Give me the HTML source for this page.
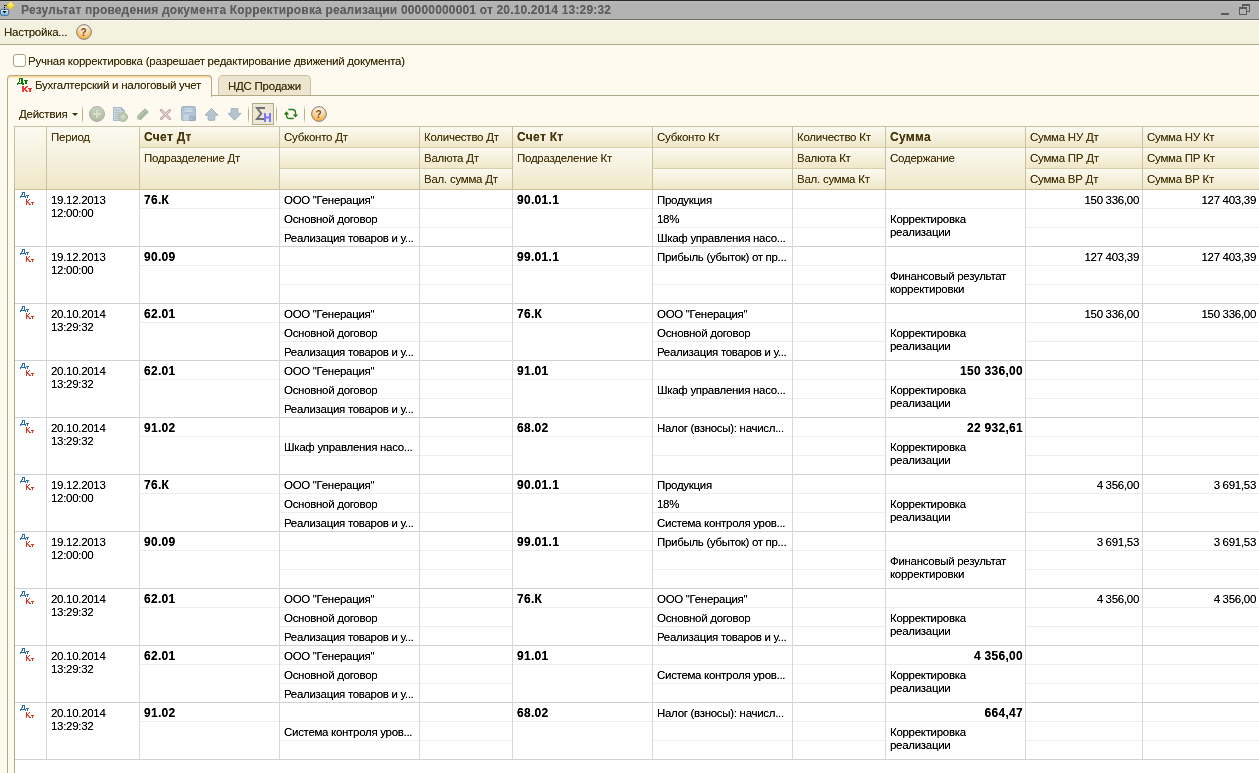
<!DOCTYPE html>
<html><head><meta charset="utf-8"><style>
html,body{margin:0;padding:0;}
body{width:1259px;height:773px;overflow:hidden;position:relative;background:#fffaef;font-family:"Liberation Sans", sans-serif;font-size:11px;}
.t{position:absolute;white-space:nowrap;line-height:13px;font-size:11.5px;font-family:"Liberation Sans", sans-serif;letter-spacing:-0.25px}
.b{font-weight:bold;font-size:12px;letter-spacing:0.3px}
.d{letter-spacing:-0.3px}
</style></head><body>
<svg width="0" height="0" style="position:absolute"><filter id="tb" x="0" y="0" width="1" height="1" color-interpolation-filters="sRGB"><feComponentTransfer><feFuncA type="linear" slope="1.35" intercept="-0.05"/></feComponentTransfer></filter></svg>
<div style="position:absolute;left:0px;top:0px;width:1259px;height:1px;background:#2c2c2c"></div><div style="position:absolute;left:0px;top:1px;width:1259px;height:18px;background:linear-gradient(#b9b9b9,#b3b3b3 3px,#b2b2b2)"></div><div style="position:absolute;left:0px;top:19px;width:1259px;height:1px;background:#6d6d6d"></div><svg style="position:absolute;left:0;top:0" width="17" height="17" viewBox="0 0 17 17">
<defs><linearGradient id="tig" x1="0" y1="0" x2="0" y2="1"><stop offset="0" stop-color="#d8f2ff"/><stop offset="1" stop-color="#7cc0e8"/></linearGradient>
<linearGradient id="tid" x1="0" y1="0" x2="0" y2="1"><stop offset="0" stop-color="#fffbd0"/><stop offset="0.5" stop-color="#f8e43c"/><stop offset="1" stop-color="#f0d010"/></linearGradient></defs>
<rect x="0.5" y="9.3" width="8.2" height="6" rx="1.6" fill="url(#tig)" stroke="#3d6d94"/>
<path d="M10.6 1.2 L14.8 5.5 L10.6 9.8 L6.6 5.5 Z" fill="url(#tid)" stroke="#d6a84a" stroke-width="0.7"/>
<path d="M4.5 5.5 H7" stroke="#000" stroke-dasharray="1 1"/>
<path d="M4.5 5 V11" stroke="#000" stroke-dasharray="1 1"/>
<path d="M2.4 11 H6.6 L4.5 13.6 Z" fill="#000"/>
</svg><div style="position:absolute;left:1221px;top:13px;width:8px;height:2px;background:#5a5a5a"></div><div style="position:absolute;left:1242px;top:4px;width:8px;height:8px;border:1px solid #5a5a5a;border-top-width:2px;box-sizing:border-box"></div><div style="position:absolute;left:1239px;top:7px;width:8px;height:8px;border:1px solid #5a5a5a;border-top-width:2px;box-sizing:border-box;background:#b4b4b4"></div><div style="position:absolute;left:0px;top:20px;width:1259px;height:24px;background:linear-gradient(#f9f7ea,#f3f1df 2px)"></div><div style="position:absolute;left:0px;top:44px;width:1259px;height:1px;background:#b2aa85"></div><svg style="position:absolute;left:76px;top:24px" width="16" height="16" viewBox="0 0 16 16">
<defs><radialGradient id="hg76" cx="0.5" cy="0.25" r="0.8"><stop offset="0" stop-color="#fffaf0"/><stop offset="0.35" stop-color="#fbe2b8"/><stop offset="0.8" stop-color="#f6b553"/><stop offset="1" stop-color="#f0a23a"/></radialGradient></defs>
<circle cx="8" cy="8" r="7.4" fill="url(#hg76)" stroke="#85838a" stroke-width="1"/>
<text x="7.6" y="11.6" text-anchor="middle" font-family="Liberation Sans" font-weight="bold" font-size="10" fill="#76471c">?</text>
</svg><div style="position:absolute;left:0px;top:45px;width:1259px;height:728px;background:#fffaef"></div><div style="position:absolute;left:13px;top:54px;width:13px;height:13px;border:1px solid #aaa27f;border-radius:3px;background:#fffffa;box-sizing:border-box"></div><div style="position:absolute;left:218px;top:75px;width:93px;height:21px;background:#ece6d1;border:1px solid #c9c1a0;border-bottom:none;border-radius:5px 5px 0 0;box-sizing:border-box"></div><div style="position:absolute;left:7px;top:95px;width:1252px;height:1px;background:#b2aa85"></div><div style="position:absolute;left:7px;top:95px;width:1px;height:678px;background:#b2aa85"></div><div style="position:absolute;left:7px;top:75px;width:205px;height:22px;background:#fffaef;border:1px solid #b2aa85;border-bottom:none;border-radius:4px 4px 0 0;box-sizing:border-box;box-shadow:inset 0 1px #fbd697,inset 0 2px #fde7bb"></div><svg style="position:absolute;left:16px;top:77px" width="17" height="16" shape-rendering="crispEdges"><rect x="3" y="1" width="4" height="1" fill="#0b7a0b" opacity="1"/><rect x="3" y="2" width="1" height="3" fill="#0b7a0b" opacity="1"/><rect x="5" y="2" width="2" height="4" fill="#0b7a0b" opacity="1"/><rect x="2" y="5" width="1" height="1" fill="#0b7a0b" opacity="1"/><rect x="1" y="6" width="7" height="1" fill="#0b7a0b" opacity="1"/><rect x="1" y="7" width="1" height="1" fill="#0b7a0b" opacity="1"/><rect x="6" y="7" width="2" height="1" fill="#0b7a0b" opacity="1"/><rect x="8" y="3" width="4" height="1" fill="#0b7a0b" opacity="1"/><rect x="9" y="4" width="2" height="3" fill="#0b7a0b" opacity="1"/><rect x="6" y="9" width="2" height="6" fill="#ff3232" opacity="1"/><rect x="10" y="9" width="2" height="1" fill="#ff3232" opacity="1"/><rect x="9" y="10" width="2" height="1" fill="#ff3232" opacity="1"/><rect x="8" y="11" width="2" height="2" fill="#ff3232" opacity="1"/><rect x="9" y="13" width="2" height="1" fill="#ff3232" opacity="1"/><rect x="10" y="14" width="2" height="1" fill="#ff3232" opacity="1"/><rect x="12" y="11" width="4" height="1" fill="#ff3232" opacity="1"/><rect x="13" y="12" width="2" height="3" fill="#ff3232" opacity="1"/></svg><div style="position:absolute;left:72px;top:113px;width:0;height:0;border-left:3px solid transparent;border-right:3px solid transparent;border-top:3px solid #3a2f0f"></div><div style="position:absolute;left:82px;top:105px;width:1px;height:19px;background:linear-gradient(#fffaef,#b9b08a 30%,#b9b08a 70%,#fffaef)"></div><div style="position:absolute;left:248px;top:105px;width:1px;height:19px;background:linear-gradient(#fffaef,#b9b08a 30%,#b9b08a 70%,#fffaef)"></div><div style="position:absolute;left:276px;top:105px;width:1px;height:19px;background:linear-gradient(#fffaef,#b9b08a 30%,#b9b08a 70%,#fffaef)"></div><div style="position:absolute;left:304px;top:105px;width:1px;height:19px;background:linear-gradient(#fffaef,#b9b08a 30%,#b9b08a 70%,#fffaef)"></div><svg style="position:absolute;left:89px;top:106px" width="16" height="16" viewBox="0 0 16 16" ><defs><linearGradient id="cpg" x1="0" y1="0" x2="0" y2="1"><stop offset="0" stop-color="#c6d4b8"/><stop offset="1" stop-color="#aebd9f"/></linearGradient></defs>
<circle cx="8" cy="8" r="7.5" fill="url(#cpg)" stroke="#aaa6aa" stroke-width="0.9"/>
<rect x="4" y="7" width="8" height="2" fill="#dcdcd2"/><rect x="7" y="4" width="2" height="8" fill="#dcdcd2"/></svg><svg style="position:absolute;left:113px;top:107px" width="16" height="15" viewBox="0 0 16 15" ><path d="M0.5 0.5 H8.5 L11.5 3.5 V13.5 H0.5 Z" fill="#cdd5dc" stroke="#a9b9c9"/>
<path d="M8.5 0.5 V3.5 H11.5" fill="#b7c7d6" stroke="#a9b9c9"/>
<rect x="2" y="3" width="5" height="1" fill="#b3bcc4"/><rect x="2" y="5" width="5" height="1" fill="#b3bcc4"/>
<rect x="2" y="7" width="5" height="1" fill="#a9c0d6"/><rect x="2" y="9" width="4" height="1" fill="#a9c0d6"/><rect x="2" y="11" width="4" height="1" fill="#a9c0d6"/>
<circle cx="10" cy="10" r="4.6" fill="#b7c8a8" stroke="#a9b99a" stroke-width="0.8"/>
<rect x="7.5" y="9.2" width="5" height="1.6" fill="#d8d8d0"/><rect x="9.2" y="7.5" width="1.6" height="5" fill="#d8d8d0"/></svg><svg style="position:absolute;left:137px;top:108px" width="12" height="12" viewBox="0 0 12 12" ><path d="M0 12 L0 8.2 L8 0.2 L11.8 4 L3.8 12 Z" fill="#a7b79f"/>
<path d="M1.5 9.5 L8.6 2.4" stroke="#c3cfbc" stroke-width="1"/>
<path d="M0 12 L0 9 L3 12 Z" fill="#d5ddd0"/></svg><svg style="position:absolute;left:160px;top:109px" width="11" height="11" viewBox="0 0 11 11" ><path d="M1.2 1.2 L9.8 9.8 M9.8 1.2 L1.2 9.8" stroke="#c9aeb2" stroke-width="3" stroke-linecap="round"/>
<path d="M1.6 1.6 L9.4 9.4 M9.4 1.6 L1.6 9.4" stroke="#e9ddd9" stroke-width="1"/></svg><svg style="position:absolute;left:181px;top:106px" width="15" height="15" viewBox="0 0 15 15" ><rect x="0.5" y="0.5" width="14" height="14" rx="1.5" fill="#b2c6d9" stroke="#a3b6c9"/>
<rect x="3" y="1.5" width="9" height="5" fill="#c9d9e3" stroke="#a9bccd" stroke-width="0.8"/>
<rect x="4" y="3" width="7" height="1" fill="#b9cbd8"/>
<rect x="2.5" y="8.5" width="5" height="6" fill="#c9d3da"/>
<text x="8" y="14.6" font-family="Liberation Sans" font-weight="bold" font-size="6.5" fill="#8fa3b6">OK</text></svg><svg style="position:absolute;left:205px;top:108px" width="14" height="13" viewBox="0 0 14 13" ><path d="M6.5 0.5 L13.2 7.2 L9.8 7.2 L9.8 11.6 Q9.8 12.3 9.1 12.3 L3.9 12.3 Q3.2 12.3 3.2 11.6 L3.2 7.2 L-0.2 7.2 Z" fill="#b4c4d0" stroke="#9eadb9" stroke-width="0.9"/></svg><svg style="position:absolute;left:228px;top:108px" width="14" height="13" viewBox="0 0 14 13" ><path d="M3.2 0.6 Q3.2 0 3.9 0 L9.1 0 Q9.8 0 9.8 0.6 L9.8 5.3 L13.2 5.3 L6.5 12.2 L-0.2 5.3 L3.2 5.3 Z" fill="#b4c4d0" stroke="#9eadb9" stroke-width="0.9"/></svg><div style="position:absolute;left:252px;top:103px;width:22px;height:22px;background:#ede7d3;border:1px solid #b1a982;box-sizing:border-box"></div><svg style="position:absolute;left:255px;top:106px" width="18" height="18" viewBox="0 0 18 18" ><path d="M10 2 H2 L6.2 7.5 L2 13 H10" fill="none" stroke="#707070" stroke-width="2" stroke-linejoin="miter"/>
<path d="M10 7 V16 M15 7 V16 M10 11.5 H15" stroke="#7777ff" stroke-width="2"/></svg><svg style="position:absolute;left:280px;top:104px" width="22" height="20" viewBox="0 0 22 20" ><path d="M8.3 5.5 H12.3 Q15.5 5.5 15.5 9 V10.8" fill="none" stroke="#23801c" stroke-width="1.4"/>
<path d="M12.8 10.4 H18.2 L15.5 13.6 Z" fill="#1f7416"/>
<path d="M13.7 14.5 H9.6 Q6.5 14.5 6.5 11.2 V9.6" fill="none" stroke="#23801c" stroke-width="1.4"/>
<path d="M3.8 10.6 H9.2 L6.5 7.3 Z" fill="#1f7416"/></svg><svg style="position:absolute;left:311px;top:106px" width="16" height="16" viewBox="0 0 16 16">
<defs><radialGradient id="hg311" cx="0.5" cy="0.25" r="0.8"><stop offset="0" stop-color="#fffaf0"/><stop offset="0.35" stop-color="#fbe2b8"/><stop offset="0.8" stop-color="#f6b553"/><stop offset="1" stop-color="#f0a23a"/></radialGradient></defs>
<circle cx="8" cy="8" r="7.4" fill="url(#hg311)" stroke="#85838a" stroke-width="1"/>
<text x="7.6" y="11.6" text-anchor="middle" font-family="Liberation Sans" font-weight="bold" font-size="10" fill="#76471c">?</text>
</svg>
<div style="position:absolute;left:14px;top:126px;width:1245px;height:647px;background:#fff"></div><div style="position:absolute;left:15px;top:127px;width:31px;height:62px;background:linear-gradient(#fbfaf2,#f7f3e2 40%,#efe7c8)"></div><div style="position:absolute;left:47px;top:127px;width:92px;height:62px;background:linear-gradient(#fbfaf2,#f7f3e2 40%,#efe7c8)"></div><div style="position:absolute;left:140px;top:127px;width:139px;height:20px;background:linear-gradient(#fbfaf2,#f7f3e2 40%,#efe7c8)"></div><div style="position:absolute;left:140px;top:148px;width:139px;height:41px;background:linear-gradient(#fbfaf2,#f7f3e2 40%,#efe7c8)"></div><div style="position:absolute;left:140px;top:147px;width:139px;height:1px;background:#d9d0ab"></div><div style="position:absolute;left:280px;top:127px;width:139px;height:20px;background:linear-gradient(#fbfaf2,#f7f3e2 40%,#efe7c8)"></div><div style="position:absolute;left:280px;top:148px;width:139px;height:20px;background:linear-gradient(#fbfaf2,#f7f3e2 40%,#efe7c8)"></div><div style="position:absolute;left:280px;top:169px;width:139px;height:20px;background:linear-gradient(#fbfaf2,#f7f3e2 40%,#efe7c8)"></div><div style="position:absolute;left:280px;top:147px;width:139px;height:1px;background:#d9d0ab"></div><div style="position:absolute;left:280px;top:168px;width:139px;height:1px;background:#d9d0ab"></div><div style="position:absolute;left:420px;top:127px;width:92px;height:20px;background:linear-gradient(#fbfaf2,#f7f3e2 40%,#efe7c8)"></div><div style="position:absolute;left:420px;top:148px;width:92px;height:20px;background:linear-gradient(#fbfaf2,#f7f3e2 40%,#efe7c8)"></div><div style="position:absolute;left:420px;top:169px;width:92px;height:20px;background:linear-gradient(#fbfaf2,#f7f3e2 40%,#efe7c8)"></div><div style="position:absolute;left:420px;top:147px;width:92px;height:1px;background:#d9d0ab"></div><div style="position:absolute;left:420px;top:168px;width:92px;height:1px;background:#d9d0ab"></div><div style="position:absolute;left:513px;top:127px;width:139px;height:20px;background:linear-gradient(#fbfaf2,#f7f3e2 40%,#efe7c8)"></div><div style="position:absolute;left:513px;top:148px;width:139px;height:41px;background:linear-gradient(#fbfaf2,#f7f3e2 40%,#efe7c8)"></div><div style="position:absolute;left:513px;top:147px;width:139px;height:1px;background:#d9d0ab"></div><div style="position:absolute;left:653px;top:127px;width:139px;height:20px;background:linear-gradient(#fbfaf2,#f7f3e2 40%,#efe7c8)"></div><div style="position:absolute;left:653px;top:148px;width:139px;height:20px;background:linear-gradient(#fbfaf2,#f7f3e2 40%,#efe7c8)"></div><div style="position:absolute;left:653px;top:169px;width:139px;height:20px;background:linear-gradient(#fbfaf2,#f7f3e2 40%,#efe7c8)"></div><div style="position:absolute;left:653px;top:147px;width:139px;height:1px;background:#d9d0ab"></div><div style="position:absolute;left:653px;top:168px;width:139px;height:1px;background:#d9d0ab"></div><div style="position:absolute;left:793px;top:127px;width:92px;height:20px;background:linear-gradient(#fbfaf2,#f7f3e2 40%,#efe7c8)"></div><div style="position:absolute;left:793px;top:148px;width:92px;height:20px;background:linear-gradient(#fbfaf2,#f7f3e2 40%,#efe7c8)"></div><div style="position:absolute;left:793px;top:169px;width:92px;height:20px;background:linear-gradient(#fbfaf2,#f7f3e2 40%,#efe7c8)"></div><div style="position:absolute;left:793px;top:147px;width:92px;height:1px;background:#d9d0ab"></div><div style="position:absolute;left:793px;top:168px;width:92px;height:1px;background:#d9d0ab"></div><div style="position:absolute;left:886px;top:127px;width:139px;height:20px;background:linear-gradient(#fbfaf2,#f7f3e2 40%,#efe7c8)"></div><div style="position:absolute;left:886px;top:148px;width:139px;height:41px;background:linear-gradient(#fbfaf2,#f7f3e2 40%,#efe7c8)"></div><div style="position:absolute;left:886px;top:147px;width:139px;height:1px;background:#d9d0ab"></div><div style="position:absolute;left:1026px;top:127px;width:116px;height:20px;background:linear-gradient(#fbfaf2,#f7f3e2 40%,#efe7c8)"></div><div style="position:absolute;left:1026px;top:148px;width:116px;height:20px;background:linear-gradient(#fbfaf2,#f7f3e2 40%,#efe7c8)"></div><div style="position:absolute;left:1026px;top:169px;width:116px;height:20px;background:linear-gradient(#fbfaf2,#f7f3e2 40%,#efe7c8)"></div><div style="position:absolute;left:1026px;top:147px;width:116px;height:1px;background:#d9d0ab"></div><div style="position:absolute;left:1026px;top:168px;width:116px;height:1px;background:#d9d0ab"></div><div style="position:absolute;left:1143px;top:127px;width:147px;height:20px;background:linear-gradient(#fbfaf2,#f7f3e2 40%,#efe7c8)"></div><div style="position:absolute;left:1143px;top:148px;width:147px;height:20px;background:linear-gradient(#fbfaf2,#f7f3e2 40%,#efe7c8)"></div><div style="position:absolute;left:1143px;top:169px;width:147px;height:20px;background:linear-gradient(#fbfaf2,#f7f3e2 40%,#efe7c8)"></div><div style="position:absolute;left:1143px;top:147px;width:147px;height:1px;background:#d9d0ab"></div><div style="position:absolute;left:1143px;top:168px;width:147px;height:1px;background:#d9d0ab"></div><div style="position:absolute;left:14px;top:126px;width:1245px;height:1px;background:#c9c19f"></div><div style="position:absolute;left:14px;top:189px;width:1245px;height:1px;background:#c9c19f"></div><div style="position:absolute;left:14px;top:126px;width:1px;height:64px;background:#c9c19f"></div><div style="position:absolute;left:46px;top:126px;width:1px;height:64px;background:#c9c19f"></div><div style="position:absolute;left:139px;top:126px;width:1px;height:64px;background:#c9c19f"></div><div style="position:absolute;left:279px;top:126px;width:1px;height:64px;background:#c9c19f"></div><div style="position:absolute;left:419px;top:126px;width:1px;height:64px;background:#c9c19f"></div><div style="position:absolute;left:512px;top:126px;width:1px;height:64px;background:#c9c19f"></div><div style="position:absolute;left:652px;top:126px;width:1px;height:64px;background:#c9c19f"></div><div style="position:absolute;left:792px;top:126px;width:1px;height:64px;background:#c9c19f"></div><div style="position:absolute;left:885px;top:126px;width:1px;height:64px;background:#c9c19f"></div><div style="position:absolute;left:1025px;top:126px;width:1px;height:64px;background:#c9c19f"></div><div style="position:absolute;left:1142px;top:126px;width:1px;height:64px;background:#c9c19f"></div><div style="position:absolute;left:140px;top:208px;width:139px;height:1px;background:#ededed"></div><div style="position:absolute;left:280px;top:208px;width:139px;height:1px;background:#ededed"></div><div style="position:absolute;left:280px;top:227px;width:139px;height:1px;background:#ededed"></div><div style="position:absolute;left:420px;top:208px;width:92px;height:1px;background:#ededed"></div><div style="position:absolute;left:420px;top:227px;width:92px;height:1px;background:#ededed"></div><div style="position:absolute;left:513px;top:208px;width:139px;height:1px;background:#ededed"></div><div style="position:absolute;left:653px;top:208px;width:139px;height:1px;background:#ededed"></div><div style="position:absolute;left:653px;top:227px;width:139px;height:1px;background:#ededed"></div><div style="position:absolute;left:793px;top:208px;width:92px;height:1px;background:#ededed"></div><div style="position:absolute;left:793px;top:227px;width:92px;height:1px;background:#ededed"></div><div style="position:absolute;left:886px;top:208px;width:139px;height:1px;background:#ededed"></div><div style="position:absolute;left:1026px;top:208px;width:116px;height:1px;background:#ededed"></div><div style="position:absolute;left:1026px;top:227px;width:116px;height:1px;background:#ededed"></div><div style="position:absolute;left:1143px;top:208px;width:147px;height:1px;background:#ededed"></div><div style="position:absolute;left:1143px;top:227px;width:147px;height:1px;background:#ededed"></div><div style="position:absolute;left:15px;top:246px;width:1244px;height:1px;background:#cbd3d8"></div><svg style="position:absolute;left:19px;top:192px" width="16" height="14" shape-rendering="crispEdges"><rect x="3" y="0" width="3" height="1" fill="#2c6ca4" opacity="1"/><rect x="3" y="1" width="1" height="2" fill="#2c6ca4" opacity="1"/><rect x="2" y="3" width="1" height="1" fill="#2c6ca4" opacity="1"/><rect x="2" y="2" width="1" height="1" fill="#2c6ca4" opacity="0.4"/><rect x="5" y="1" width="1" height="3" fill="#2c6ca4" opacity="1"/><rect x="1" y="4" width="6" height="1" fill="#2c6ca4" opacity="1"/><rect x="1" y="5" width="1" height="1" fill="#2c6ca4" opacity="1"/><rect x="6" y="5" width="1" height="1" fill="#2c6ca4" opacity="1"/><rect x="7" y="3" width="3" height="1" fill="#2c6ca4" opacity="1"/><rect x="8" y="4" width="1" height="2" fill="#2c6ca4" opacity="1"/><rect x="7" y="7" width="1" height="6" fill="#d4321e" opacity="1"/><rect x="10" y="7" width="1" height="1" fill="#d4321e" opacity="1"/><rect x="9" y="8" width="1" height="1" fill="#d4321e" opacity="1"/><rect x="8" y="9" width="1" height="1" fill="#d4321e" opacity="1"/><rect x="8" y="10" width="2" height="1" fill="#d4321e" opacity="0.8"/><rect x="9" y="11" width="2" height="1" fill="#d4321e" opacity="0.8"/><rect x="10" y="12" width="2" height="1" fill="#d4321e" opacity="1"/><rect x="12" y="10" width="3" height="1" fill="#d4321e" opacity="1"/><rect x="13" y="11" width="1" height="2" fill="#d4321e" opacity="1"/></svg><div style="position:absolute;left:140px;top:265px;width:139px;height:1px;background:#ededed"></div><div style="position:absolute;left:280px;top:265px;width:139px;height:1px;background:#ededed"></div><div style="position:absolute;left:280px;top:284px;width:139px;height:1px;background:#ededed"></div><div style="position:absolute;left:420px;top:265px;width:92px;height:1px;background:#ededed"></div><div style="position:absolute;left:420px;top:284px;width:92px;height:1px;background:#ededed"></div><div style="position:absolute;left:513px;top:265px;width:139px;height:1px;background:#ededed"></div><div style="position:absolute;left:653px;top:265px;width:139px;height:1px;background:#ededed"></div><div style="position:absolute;left:653px;top:284px;width:139px;height:1px;background:#ededed"></div><div style="position:absolute;left:793px;top:265px;width:92px;height:1px;background:#ededed"></div><div style="position:absolute;left:793px;top:284px;width:92px;height:1px;background:#ededed"></div><div style="position:absolute;left:886px;top:265px;width:139px;height:1px;background:#ededed"></div><div style="position:absolute;left:1026px;top:265px;width:116px;height:1px;background:#ededed"></div><div style="position:absolute;left:1026px;top:284px;width:116px;height:1px;background:#ededed"></div><div style="position:absolute;left:1143px;top:265px;width:147px;height:1px;background:#ededed"></div><div style="position:absolute;left:1143px;top:284px;width:147px;height:1px;background:#ededed"></div><div style="position:absolute;left:15px;top:303px;width:1244px;height:1px;background:#cbd3d8"></div><svg style="position:absolute;left:19px;top:249px" width="16" height="14" shape-rendering="crispEdges"><rect x="3" y="0" width="3" height="1" fill="#2c6ca4" opacity="1"/><rect x="3" y="1" width="1" height="2" fill="#2c6ca4" opacity="1"/><rect x="2" y="3" width="1" height="1" fill="#2c6ca4" opacity="1"/><rect x="2" y="2" width="1" height="1" fill="#2c6ca4" opacity="0.4"/><rect x="5" y="1" width="1" height="3" fill="#2c6ca4" opacity="1"/><rect x="1" y="4" width="6" height="1" fill="#2c6ca4" opacity="1"/><rect x="1" y="5" width="1" height="1" fill="#2c6ca4" opacity="1"/><rect x="6" y="5" width="1" height="1" fill="#2c6ca4" opacity="1"/><rect x="7" y="3" width="3" height="1" fill="#2c6ca4" opacity="1"/><rect x="8" y="4" width="1" height="2" fill="#2c6ca4" opacity="1"/><rect x="7" y="7" width="1" height="6" fill="#d4321e" opacity="1"/><rect x="10" y="7" width="1" height="1" fill="#d4321e" opacity="1"/><rect x="9" y="8" width="1" height="1" fill="#d4321e" opacity="1"/><rect x="8" y="9" width="1" height="1" fill="#d4321e" opacity="1"/><rect x="8" y="10" width="2" height="1" fill="#d4321e" opacity="0.8"/><rect x="9" y="11" width="2" height="1" fill="#d4321e" opacity="0.8"/><rect x="10" y="12" width="2" height="1" fill="#d4321e" opacity="1"/><rect x="12" y="10" width="3" height="1" fill="#d4321e" opacity="1"/><rect x="13" y="11" width="1" height="2" fill="#d4321e" opacity="1"/></svg><div style="position:absolute;left:140px;top:322px;width:139px;height:1px;background:#ededed"></div><div style="position:absolute;left:280px;top:322px;width:139px;height:1px;background:#ededed"></div><div style="position:absolute;left:280px;top:341px;width:139px;height:1px;background:#ededed"></div><div style="position:absolute;left:420px;top:322px;width:92px;height:1px;background:#ededed"></div><div style="position:absolute;left:420px;top:341px;width:92px;height:1px;background:#ededed"></div><div style="position:absolute;left:513px;top:322px;width:139px;height:1px;background:#ededed"></div><div style="position:absolute;left:653px;top:322px;width:139px;height:1px;background:#ededed"></div><div style="position:absolute;left:653px;top:341px;width:139px;height:1px;background:#ededed"></div><div style="position:absolute;left:793px;top:322px;width:92px;height:1px;background:#ededed"></div><div style="position:absolute;left:793px;top:341px;width:92px;height:1px;background:#ededed"></div><div style="position:absolute;left:886px;top:322px;width:139px;height:1px;background:#ededed"></div><div style="position:absolute;left:1026px;top:322px;width:116px;height:1px;background:#ededed"></div><div style="position:absolute;left:1026px;top:341px;width:116px;height:1px;background:#ededed"></div><div style="position:absolute;left:1143px;top:322px;width:147px;height:1px;background:#ededed"></div><div style="position:absolute;left:1143px;top:341px;width:147px;height:1px;background:#ededed"></div><div style="position:absolute;left:15px;top:360px;width:1244px;height:1px;background:#cbd3d8"></div><svg style="position:absolute;left:19px;top:306px" width="16" height="14" shape-rendering="crispEdges"><rect x="3" y="0" width="3" height="1" fill="#2c6ca4" opacity="1"/><rect x="3" y="1" width="1" height="2" fill="#2c6ca4" opacity="1"/><rect x="2" y="3" width="1" height="1" fill="#2c6ca4" opacity="1"/><rect x="2" y="2" width="1" height="1" fill="#2c6ca4" opacity="0.4"/><rect x="5" y="1" width="1" height="3" fill="#2c6ca4" opacity="1"/><rect x="1" y="4" width="6" height="1" fill="#2c6ca4" opacity="1"/><rect x="1" y="5" width="1" height="1" fill="#2c6ca4" opacity="1"/><rect x="6" y="5" width="1" height="1" fill="#2c6ca4" opacity="1"/><rect x="7" y="3" width="3" height="1" fill="#2c6ca4" opacity="1"/><rect x="8" y="4" width="1" height="2" fill="#2c6ca4" opacity="1"/><rect x="7" y="7" width="1" height="6" fill="#d4321e" opacity="1"/><rect x="10" y="7" width="1" height="1" fill="#d4321e" opacity="1"/><rect x="9" y="8" width="1" height="1" fill="#d4321e" opacity="1"/><rect x="8" y="9" width="1" height="1" fill="#d4321e" opacity="1"/><rect x="8" y="10" width="2" height="1" fill="#d4321e" opacity="0.8"/><rect x="9" y="11" width="2" height="1" fill="#d4321e" opacity="0.8"/><rect x="10" y="12" width="2" height="1" fill="#d4321e" opacity="1"/><rect x="12" y="10" width="3" height="1" fill="#d4321e" opacity="1"/><rect x="13" y="11" width="1" height="2" fill="#d4321e" opacity="1"/></svg><div style="position:absolute;left:140px;top:379px;width:139px;height:1px;background:#ededed"></div><div style="position:absolute;left:280px;top:379px;width:139px;height:1px;background:#ededed"></div><div style="position:absolute;left:280px;top:398px;width:139px;height:1px;background:#ededed"></div><div style="position:absolute;left:420px;top:379px;width:92px;height:1px;background:#ededed"></div><div style="position:absolute;left:420px;top:398px;width:92px;height:1px;background:#ededed"></div><div style="position:absolute;left:513px;top:379px;width:139px;height:1px;background:#ededed"></div><div style="position:absolute;left:653px;top:379px;width:139px;height:1px;background:#ededed"></div><div style="position:absolute;left:653px;top:398px;width:139px;height:1px;background:#ededed"></div><div style="position:absolute;left:793px;top:379px;width:92px;height:1px;background:#ededed"></div><div style="position:absolute;left:793px;top:398px;width:92px;height:1px;background:#ededed"></div><div style="position:absolute;left:886px;top:379px;width:139px;height:1px;background:#ededed"></div><div style="position:absolute;left:1026px;top:379px;width:116px;height:1px;background:#ededed"></div><div style="position:absolute;left:1026px;top:398px;width:116px;height:1px;background:#ededed"></div><div style="position:absolute;left:1143px;top:379px;width:147px;height:1px;background:#ededed"></div><div style="position:absolute;left:1143px;top:398px;width:147px;height:1px;background:#ededed"></div><div style="position:absolute;left:15px;top:417px;width:1244px;height:1px;background:#cbd3d8"></div><svg style="position:absolute;left:19px;top:363px" width="16" height="14" shape-rendering="crispEdges"><rect x="3" y="0" width="3" height="1" fill="#2c6ca4" opacity="1"/><rect x="3" y="1" width="1" height="2" fill="#2c6ca4" opacity="1"/><rect x="2" y="3" width="1" height="1" fill="#2c6ca4" opacity="1"/><rect x="2" y="2" width="1" height="1" fill="#2c6ca4" opacity="0.4"/><rect x="5" y="1" width="1" height="3" fill="#2c6ca4" opacity="1"/><rect x="1" y="4" width="6" height="1" fill="#2c6ca4" opacity="1"/><rect x="1" y="5" width="1" height="1" fill="#2c6ca4" opacity="1"/><rect x="6" y="5" width="1" height="1" fill="#2c6ca4" opacity="1"/><rect x="7" y="3" width="3" height="1" fill="#2c6ca4" opacity="1"/><rect x="8" y="4" width="1" height="2" fill="#2c6ca4" opacity="1"/><rect x="7" y="7" width="1" height="6" fill="#d4321e" opacity="1"/><rect x="10" y="7" width="1" height="1" fill="#d4321e" opacity="1"/><rect x="9" y="8" width="1" height="1" fill="#d4321e" opacity="1"/><rect x="8" y="9" width="1" height="1" fill="#d4321e" opacity="1"/><rect x="8" y="10" width="2" height="1" fill="#d4321e" opacity="0.8"/><rect x="9" y="11" width="2" height="1" fill="#d4321e" opacity="0.8"/><rect x="10" y="12" width="2" height="1" fill="#d4321e" opacity="1"/><rect x="12" y="10" width="3" height="1" fill="#d4321e" opacity="1"/><rect x="13" y="11" width="1" height="2" fill="#d4321e" opacity="1"/></svg><div style="position:absolute;left:140px;top:436px;width:139px;height:1px;background:#ededed"></div><div style="position:absolute;left:280px;top:436px;width:139px;height:1px;background:#ededed"></div><div style="position:absolute;left:280px;top:455px;width:139px;height:1px;background:#ededed"></div><div style="position:absolute;left:420px;top:436px;width:92px;height:1px;background:#ededed"></div><div style="position:absolute;left:420px;top:455px;width:92px;height:1px;background:#ededed"></div><div style="position:absolute;left:513px;top:436px;width:139px;height:1px;background:#ededed"></div><div style="position:absolute;left:653px;top:436px;width:139px;height:1px;background:#ededed"></div><div style="position:absolute;left:653px;top:455px;width:139px;height:1px;background:#ededed"></div><div style="position:absolute;left:793px;top:436px;width:92px;height:1px;background:#ededed"></div><div style="position:absolute;left:793px;top:455px;width:92px;height:1px;background:#ededed"></div><div style="position:absolute;left:886px;top:436px;width:139px;height:1px;background:#ededed"></div><div style="position:absolute;left:1026px;top:436px;width:116px;height:1px;background:#ededed"></div><div style="position:absolute;left:1026px;top:455px;width:116px;height:1px;background:#ededed"></div><div style="position:absolute;left:1143px;top:436px;width:147px;height:1px;background:#ededed"></div><div style="position:absolute;left:1143px;top:455px;width:147px;height:1px;background:#ededed"></div><div style="position:absolute;left:15px;top:474px;width:1244px;height:1px;background:#cbd3d8"></div><svg style="position:absolute;left:19px;top:420px" width="16" height="14" shape-rendering="crispEdges"><rect x="3" y="0" width="3" height="1" fill="#2c6ca4" opacity="1"/><rect x="3" y="1" width="1" height="2" fill="#2c6ca4" opacity="1"/><rect x="2" y="3" width="1" height="1" fill="#2c6ca4" opacity="1"/><rect x="2" y="2" width="1" height="1" fill="#2c6ca4" opacity="0.4"/><rect x="5" y="1" width="1" height="3" fill="#2c6ca4" opacity="1"/><rect x="1" y="4" width="6" height="1" fill="#2c6ca4" opacity="1"/><rect x="1" y="5" width="1" height="1" fill="#2c6ca4" opacity="1"/><rect x="6" y="5" width="1" height="1" fill="#2c6ca4" opacity="1"/><rect x="7" y="3" width="3" height="1" fill="#2c6ca4" opacity="1"/><rect x="8" y="4" width="1" height="2" fill="#2c6ca4" opacity="1"/><rect x="7" y="7" width="1" height="6" fill="#d4321e" opacity="1"/><rect x="10" y="7" width="1" height="1" fill="#d4321e" opacity="1"/><rect x="9" y="8" width="1" height="1" fill="#d4321e" opacity="1"/><rect x="8" y="9" width="1" height="1" fill="#d4321e" opacity="1"/><rect x="8" y="10" width="2" height="1" fill="#d4321e" opacity="0.8"/><rect x="9" y="11" width="2" height="1" fill="#d4321e" opacity="0.8"/><rect x="10" y="12" width="2" height="1" fill="#d4321e" opacity="1"/><rect x="12" y="10" width="3" height="1" fill="#d4321e" opacity="1"/><rect x="13" y="11" width="1" height="2" fill="#d4321e" opacity="1"/></svg><div style="position:absolute;left:140px;top:493px;width:139px;height:1px;background:#ededed"></div><div style="position:absolute;left:280px;top:493px;width:139px;height:1px;background:#ededed"></div><div style="position:absolute;left:280px;top:512px;width:139px;height:1px;background:#ededed"></div><div style="position:absolute;left:420px;top:493px;width:92px;height:1px;background:#ededed"></div><div style="position:absolute;left:420px;top:512px;width:92px;height:1px;background:#ededed"></div><div style="position:absolute;left:513px;top:493px;width:139px;height:1px;background:#ededed"></div><div style="position:absolute;left:653px;top:493px;width:139px;height:1px;background:#ededed"></div><div style="position:absolute;left:653px;top:512px;width:139px;height:1px;background:#ededed"></div><div style="position:absolute;left:793px;top:493px;width:92px;height:1px;background:#ededed"></div><div style="position:absolute;left:793px;top:512px;width:92px;height:1px;background:#ededed"></div><div style="position:absolute;left:886px;top:493px;width:139px;height:1px;background:#ededed"></div><div style="position:absolute;left:1026px;top:493px;width:116px;height:1px;background:#ededed"></div><div style="position:absolute;left:1026px;top:512px;width:116px;height:1px;background:#ededed"></div><div style="position:absolute;left:1143px;top:493px;width:147px;height:1px;background:#ededed"></div><div style="position:absolute;left:1143px;top:512px;width:147px;height:1px;background:#ededed"></div><div style="position:absolute;left:15px;top:531px;width:1244px;height:1px;background:#cbd3d8"></div><svg style="position:absolute;left:19px;top:477px" width="16" height="14" shape-rendering="crispEdges"><rect x="3" y="0" width="3" height="1" fill="#2c6ca4" opacity="1"/><rect x="3" y="1" width="1" height="2" fill="#2c6ca4" opacity="1"/><rect x="2" y="3" width="1" height="1" fill="#2c6ca4" opacity="1"/><rect x="2" y="2" width="1" height="1" fill="#2c6ca4" opacity="0.4"/><rect x="5" y="1" width="1" height="3" fill="#2c6ca4" opacity="1"/><rect x="1" y="4" width="6" height="1" fill="#2c6ca4" opacity="1"/><rect x="1" y="5" width="1" height="1" fill="#2c6ca4" opacity="1"/><rect x="6" y="5" width="1" height="1" fill="#2c6ca4" opacity="1"/><rect x="7" y="3" width="3" height="1" fill="#2c6ca4" opacity="1"/><rect x="8" y="4" width="1" height="2" fill="#2c6ca4" opacity="1"/><rect x="7" y="7" width="1" height="6" fill="#d4321e" opacity="1"/><rect x="10" y="7" width="1" height="1" fill="#d4321e" opacity="1"/><rect x="9" y="8" width="1" height="1" fill="#d4321e" opacity="1"/><rect x="8" y="9" width="1" height="1" fill="#d4321e" opacity="1"/><rect x="8" y="10" width="2" height="1" fill="#d4321e" opacity="0.8"/><rect x="9" y="11" width="2" height="1" fill="#d4321e" opacity="0.8"/><rect x="10" y="12" width="2" height="1" fill="#d4321e" opacity="1"/><rect x="12" y="10" width="3" height="1" fill="#d4321e" opacity="1"/><rect x="13" y="11" width="1" height="2" fill="#d4321e" opacity="1"/></svg><div style="position:absolute;left:140px;top:550px;width:139px;height:1px;background:#ededed"></div><div style="position:absolute;left:280px;top:550px;width:139px;height:1px;background:#ededed"></div><div style="position:absolute;left:280px;top:569px;width:139px;height:1px;background:#ededed"></div><div style="position:absolute;left:420px;top:550px;width:92px;height:1px;background:#ededed"></div><div style="position:absolute;left:420px;top:569px;width:92px;height:1px;background:#ededed"></div><div style="position:absolute;left:513px;top:550px;width:139px;height:1px;background:#ededed"></div><div style="position:absolute;left:653px;top:550px;width:139px;height:1px;background:#ededed"></div><div style="position:absolute;left:653px;top:569px;width:139px;height:1px;background:#ededed"></div><div style="position:absolute;left:793px;top:550px;width:92px;height:1px;background:#ededed"></div><div style="position:absolute;left:793px;top:569px;width:92px;height:1px;background:#ededed"></div><div style="position:absolute;left:886px;top:550px;width:139px;height:1px;background:#ededed"></div><div style="position:absolute;left:1026px;top:550px;width:116px;height:1px;background:#ededed"></div><div style="position:absolute;left:1026px;top:569px;width:116px;height:1px;background:#ededed"></div><div style="position:absolute;left:1143px;top:550px;width:147px;height:1px;background:#ededed"></div><div style="position:absolute;left:1143px;top:569px;width:147px;height:1px;background:#ededed"></div><div style="position:absolute;left:15px;top:588px;width:1244px;height:1px;background:#cbd3d8"></div><svg style="position:absolute;left:19px;top:534px" width="16" height="14" shape-rendering="crispEdges"><rect x="3" y="0" width="3" height="1" fill="#2c6ca4" opacity="1"/><rect x="3" y="1" width="1" height="2" fill="#2c6ca4" opacity="1"/><rect x="2" y="3" width="1" height="1" fill="#2c6ca4" opacity="1"/><rect x="2" y="2" width="1" height="1" fill="#2c6ca4" opacity="0.4"/><rect x="5" y="1" width="1" height="3" fill="#2c6ca4" opacity="1"/><rect x="1" y="4" width="6" height="1" fill="#2c6ca4" opacity="1"/><rect x="1" y="5" width="1" height="1" fill="#2c6ca4" opacity="1"/><rect x="6" y="5" width="1" height="1" fill="#2c6ca4" opacity="1"/><rect x="7" y="3" width="3" height="1" fill="#2c6ca4" opacity="1"/><rect x="8" y="4" width="1" height="2" fill="#2c6ca4" opacity="1"/><rect x="7" y="7" width="1" height="6" fill="#d4321e" opacity="1"/><rect x="10" y="7" width="1" height="1" fill="#d4321e" opacity="1"/><rect x="9" y="8" width="1" height="1" fill="#d4321e" opacity="1"/><rect x="8" y="9" width="1" height="1" fill="#d4321e" opacity="1"/><rect x="8" y="10" width="2" height="1" fill="#d4321e" opacity="0.8"/><rect x="9" y="11" width="2" height="1" fill="#d4321e" opacity="0.8"/><rect x="10" y="12" width="2" height="1" fill="#d4321e" opacity="1"/><rect x="12" y="10" width="3" height="1" fill="#d4321e" opacity="1"/><rect x="13" y="11" width="1" height="2" fill="#d4321e" opacity="1"/></svg><div style="position:absolute;left:140px;top:607px;width:139px;height:1px;background:#ededed"></div><div style="position:absolute;left:280px;top:607px;width:139px;height:1px;background:#ededed"></div><div style="position:absolute;left:280px;top:626px;width:139px;height:1px;background:#ededed"></div><div style="position:absolute;left:420px;top:607px;width:92px;height:1px;background:#ededed"></div><div style="position:absolute;left:420px;top:626px;width:92px;height:1px;background:#ededed"></div><div style="position:absolute;left:513px;top:607px;width:139px;height:1px;background:#ededed"></div><div style="position:absolute;left:653px;top:607px;width:139px;height:1px;background:#ededed"></div><div style="position:absolute;left:653px;top:626px;width:139px;height:1px;background:#ededed"></div><div style="position:absolute;left:793px;top:607px;width:92px;height:1px;background:#ededed"></div><div style="position:absolute;left:793px;top:626px;width:92px;height:1px;background:#ededed"></div><div style="position:absolute;left:886px;top:607px;width:139px;height:1px;background:#ededed"></div><div style="position:absolute;left:1026px;top:607px;width:116px;height:1px;background:#ededed"></div><div style="position:absolute;left:1026px;top:626px;width:116px;height:1px;background:#ededed"></div><div style="position:absolute;left:1143px;top:607px;width:147px;height:1px;background:#ededed"></div><div style="position:absolute;left:1143px;top:626px;width:147px;height:1px;background:#ededed"></div><div style="position:absolute;left:15px;top:645px;width:1244px;height:1px;background:#cbd3d8"></div><svg style="position:absolute;left:19px;top:591px" width="16" height="14" shape-rendering="crispEdges"><rect x="3" y="0" width="3" height="1" fill="#2c6ca4" opacity="1"/><rect x="3" y="1" width="1" height="2" fill="#2c6ca4" opacity="1"/><rect x="2" y="3" width="1" height="1" fill="#2c6ca4" opacity="1"/><rect x="2" y="2" width="1" height="1" fill="#2c6ca4" opacity="0.4"/><rect x="5" y="1" width="1" height="3" fill="#2c6ca4" opacity="1"/><rect x="1" y="4" width="6" height="1" fill="#2c6ca4" opacity="1"/><rect x="1" y="5" width="1" height="1" fill="#2c6ca4" opacity="1"/><rect x="6" y="5" width="1" height="1" fill="#2c6ca4" opacity="1"/><rect x="7" y="3" width="3" height="1" fill="#2c6ca4" opacity="1"/><rect x="8" y="4" width="1" height="2" fill="#2c6ca4" opacity="1"/><rect x="7" y="7" width="1" height="6" fill="#d4321e" opacity="1"/><rect x="10" y="7" width="1" height="1" fill="#d4321e" opacity="1"/><rect x="9" y="8" width="1" height="1" fill="#d4321e" opacity="1"/><rect x="8" y="9" width="1" height="1" fill="#d4321e" opacity="1"/><rect x="8" y="10" width="2" height="1" fill="#d4321e" opacity="0.8"/><rect x="9" y="11" width="2" height="1" fill="#d4321e" opacity="0.8"/><rect x="10" y="12" width="2" height="1" fill="#d4321e" opacity="1"/><rect x="12" y="10" width="3" height="1" fill="#d4321e" opacity="1"/><rect x="13" y="11" width="1" height="2" fill="#d4321e" opacity="1"/></svg><div style="position:absolute;left:140px;top:664px;width:139px;height:1px;background:#ededed"></div><div style="position:absolute;left:280px;top:664px;width:139px;height:1px;background:#ededed"></div><div style="position:absolute;left:280px;top:683px;width:139px;height:1px;background:#ededed"></div><div style="position:absolute;left:420px;top:664px;width:92px;height:1px;background:#ededed"></div><div style="position:absolute;left:420px;top:683px;width:92px;height:1px;background:#ededed"></div><div style="position:absolute;left:513px;top:664px;width:139px;height:1px;background:#ededed"></div><div style="position:absolute;left:653px;top:664px;width:139px;height:1px;background:#ededed"></div><div style="position:absolute;left:653px;top:683px;width:139px;height:1px;background:#ededed"></div><div style="position:absolute;left:793px;top:664px;width:92px;height:1px;background:#ededed"></div><div style="position:absolute;left:793px;top:683px;width:92px;height:1px;background:#ededed"></div><div style="position:absolute;left:886px;top:664px;width:139px;height:1px;background:#ededed"></div><div style="position:absolute;left:1026px;top:664px;width:116px;height:1px;background:#ededed"></div><div style="position:absolute;left:1026px;top:683px;width:116px;height:1px;background:#ededed"></div><div style="position:absolute;left:1143px;top:664px;width:147px;height:1px;background:#ededed"></div><div style="position:absolute;left:1143px;top:683px;width:147px;height:1px;background:#ededed"></div><div style="position:absolute;left:15px;top:702px;width:1244px;height:1px;background:#cbd3d8"></div><svg style="position:absolute;left:19px;top:648px" width="16" height="14" shape-rendering="crispEdges"><rect x="3" y="0" width="3" height="1" fill="#2c6ca4" opacity="1"/><rect x="3" y="1" width="1" height="2" fill="#2c6ca4" opacity="1"/><rect x="2" y="3" width="1" height="1" fill="#2c6ca4" opacity="1"/><rect x="2" y="2" width="1" height="1" fill="#2c6ca4" opacity="0.4"/><rect x="5" y="1" width="1" height="3" fill="#2c6ca4" opacity="1"/><rect x="1" y="4" width="6" height="1" fill="#2c6ca4" opacity="1"/><rect x="1" y="5" width="1" height="1" fill="#2c6ca4" opacity="1"/><rect x="6" y="5" width="1" height="1" fill="#2c6ca4" opacity="1"/><rect x="7" y="3" width="3" height="1" fill="#2c6ca4" opacity="1"/><rect x="8" y="4" width="1" height="2" fill="#2c6ca4" opacity="1"/><rect x="7" y="7" width="1" height="6" fill="#d4321e" opacity="1"/><rect x="10" y="7" width="1" height="1" fill="#d4321e" opacity="1"/><rect x="9" y="8" width="1" height="1" fill="#d4321e" opacity="1"/><rect x="8" y="9" width="1" height="1" fill="#d4321e" opacity="1"/><rect x="8" y="10" width="2" height="1" fill="#d4321e" opacity="0.8"/><rect x="9" y="11" width="2" height="1" fill="#d4321e" opacity="0.8"/><rect x="10" y="12" width="2" height="1" fill="#d4321e" opacity="1"/><rect x="12" y="10" width="3" height="1" fill="#d4321e" opacity="1"/><rect x="13" y="11" width="1" height="2" fill="#d4321e" opacity="1"/></svg><div style="position:absolute;left:140px;top:721px;width:139px;height:1px;background:#ededed"></div><div style="position:absolute;left:280px;top:721px;width:139px;height:1px;background:#ededed"></div><div style="position:absolute;left:280px;top:740px;width:139px;height:1px;background:#ededed"></div><div style="position:absolute;left:420px;top:721px;width:92px;height:1px;background:#ededed"></div><div style="position:absolute;left:420px;top:740px;width:92px;height:1px;background:#ededed"></div><div style="position:absolute;left:513px;top:721px;width:139px;height:1px;background:#ededed"></div><div style="position:absolute;left:653px;top:721px;width:139px;height:1px;background:#ededed"></div><div style="position:absolute;left:653px;top:740px;width:139px;height:1px;background:#ededed"></div><div style="position:absolute;left:793px;top:721px;width:92px;height:1px;background:#ededed"></div><div style="position:absolute;left:793px;top:740px;width:92px;height:1px;background:#ededed"></div><div style="position:absolute;left:886px;top:721px;width:139px;height:1px;background:#ededed"></div><div style="position:absolute;left:1026px;top:721px;width:116px;height:1px;background:#ededed"></div><div style="position:absolute;left:1026px;top:740px;width:116px;height:1px;background:#ededed"></div><div style="position:absolute;left:1143px;top:721px;width:147px;height:1px;background:#ededed"></div><div style="position:absolute;left:1143px;top:740px;width:147px;height:1px;background:#ededed"></div><div style="position:absolute;left:15px;top:759px;width:1244px;height:1px;background:#cbd3d8"></div><svg style="position:absolute;left:19px;top:705px" width="16" height="14" shape-rendering="crispEdges"><rect x="3" y="0" width="3" height="1" fill="#2c6ca4" opacity="1"/><rect x="3" y="1" width="1" height="2" fill="#2c6ca4" opacity="1"/><rect x="2" y="3" width="1" height="1" fill="#2c6ca4" opacity="1"/><rect x="2" y="2" width="1" height="1" fill="#2c6ca4" opacity="0.4"/><rect x="5" y="1" width="1" height="3" fill="#2c6ca4" opacity="1"/><rect x="1" y="4" width="6" height="1" fill="#2c6ca4" opacity="1"/><rect x="1" y="5" width="1" height="1" fill="#2c6ca4" opacity="1"/><rect x="6" y="5" width="1" height="1" fill="#2c6ca4" opacity="1"/><rect x="7" y="3" width="3" height="1" fill="#2c6ca4" opacity="1"/><rect x="8" y="4" width="1" height="2" fill="#2c6ca4" opacity="1"/><rect x="7" y="7" width="1" height="6" fill="#d4321e" opacity="1"/><rect x="10" y="7" width="1" height="1" fill="#d4321e" opacity="1"/><rect x="9" y="8" width="1" height="1" fill="#d4321e" opacity="1"/><rect x="8" y="9" width="1" height="1" fill="#d4321e" opacity="1"/><rect x="8" y="10" width="2" height="1" fill="#d4321e" opacity="0.8"/><rect x="9" y="11" width="2" height="1" fill="#d4321e" opacity="0.8"/><rect x="10" y="12" width="2" height="1" fill="#d4321e" opacity="1"/><rect x="12" y="10" width="3" height="1" fill="#d4321e" opacity="1"/><rect x="13" y="11" width="1" height="2" fill="#d4321e" opacity="1"/></svg><div style="position:absolute;left:14px;top:190px;width:1px;height:583px;background:#b2aa85"></div><div style="position:absolute;left:46px;top:190px;width:1px;height:569px;background:#d2d9df"></div><div style="position:absolute;left:139px;top:190px;width:1px;height:569px;background:#d2d9df"></div><div style="position:absolute;left:279px;top:190px;width:1px;height:569px;background:#d2d9df"></div><div style="position:absolute;left:419px;top:190px;width:1px;height:569px;background:#d2d9df"></div><div style="position:absolute;left:512px;top:190px;width:1px;height:569px;background:#d2d9df"></div><div style="position:absolute;left:652px;top:190px;width:1px;height:569px;background:#d2d9df"></div><div style="position:absolute;left:792px;top:190px;width:1px;height:569px;background:#d2d9df"></div><div style="position:absolute;left:885px;top:190px;width:1px;height:569px;background:#d2d9df"></div><div style="position:absolute;left:1025px;top:190px;width:1px;height:569px;background:#d2d9df"></div><div style="position:absolute;left:1142px;top:190px;width:1px;height:569px;background:#d2d9df"></div>
<div style="position:absolute;left:0;top:0;width:1259px;height:773px;filter:url(#tb)">
<div class="t" style="left:21px;top:4px;font-size:12px;font-weight:bold;color:#5e5e5e;letter-spacing:0.17px">Результат проведения документа Корректировка реализации 00000000001 от 20.10.2014 13:29:32</div><div class="t" style="left:4px;top:26px;color:#3f300c;font-size:11.5px;">Настройка...</div><div class="t" style="left:28px;top:55px;color:#3f300c;font-size:11.5px;">Ручная корректировка (разрешает редактирование движений документа)</div><div class="t" style="left:228px;top:80px;color:#3f300c;font-size:11.5px;">НДС Продажи</div><div class="t" style="left:35px;top:79px;color:#3f300c;font-size:11.5px;">Бухгалтерский и налоговый учет</div><div class="t" style="left:19px;top:108px;color:#3f300c;font-size:11.5px;">Действия</div>
<div class="t" style="left:51px;top:131px;color:#4a380e;">Период</div><div class="t b" style="left:144px;top:131px;color:#4a380e;">Счет Дт</div><div class="t" style="left:144px;top:152px;color:#4a380e;">Подразделение Дт</div><div class="t" style="left:284px;top:131px;color:#4a380e;">Субконто Дт</div><div class="t" style="left:424px;top:131px;color:#4a380e;">Количество Дт</div><div class="t" style="left:424px;top:152px;color:#4a380e;">Валюта Дт</div><div class="t" style="left:424px;top:173px;color:#4a380e;">Вал. сумма Дт</div><div class="t b" style="left:517px;top:131px;color:#4a380e;">Счет Кт</div><div class="t" style="left:517px;top:152px;color:#4a380e;">Подразделение Кт</div><div class="t" style="left:657px;top:131px;color:#4a380e;">Субконто Кт</div><div class="t" style="left:797px;top:131px;color:#4a380e;">Количество Кт</div><div class="t" style="left:797px;top:152px;color:#4a380e;">Валюта Кт</div><div class="t" style="left:797px;top:173px;color:#4a380e;">Вал. сумма Кт</div><div class="t b" style="left:890px;top:131px;color:#4a380e;">Сумма</div><div class="t" style="left:890px;top:152px;color:#4a380e;">Содержание</div><div class="t" style="left:1030px;top:131px;color:#4a380e;">Сумма НУ Дт</div><div class="t" style="left:1030px;top:152px;color:#4a380e;">Сумма ПР Дт</div><div class="t" style="left:1030px;top:173px;color:#4a380e;">Сумма ВР Дт</div><div class="t" style="left:1147px;top:131px;color:#4a380e;">Сумма НУ Кт</div><div class="t" style="left:1147px;top:152px;color:#4a380e;">Сумма ПР Кт</div><div class="t" style="left:1147px;top:173px;color:#4a380e;">Сумма ВР Кт</div><div class="t d" style="left:51px;top:194px;color:#000;">19.12.2013</div><div class="t d" style="left:51px;top:207px;color:#000;">12:00:00</div><div class="t b" style="left:144px;top:194px;color:#000;">76.К</div><div class="t d" style="left:284px;top:194px;color:#000;">ООО &quot;Генерация&quot;</div><div class="t d" style="left:284px;top:213px;color:#000;">Основной договор</div><div class="t d" style="left:284px;top:232px;color:#000;">Реализация товаров и у...</div><div class="t b" style="left:517px;top:194px;color:#000;">90.01.1</div><div class="t d" style="left:657px;top:194px;color:#000;">Продукция</div><div class="t d" style="left:657px;top:213px;color:#000;">18%</div><div class="t d" style="left:657px;top:232px;color:#000;">Шкаф управления насо...</div><div class="t d" style="left:890px;top:213px;color:#000;">Корректировка</div><div class="t d" style="left:890px;top:226px;color:#000;">реализации</div><div class="t d" style="left:939px;width:200px;text-align:right;top:194px;color:#000">150 336,00</div><div class="t d" style="left:1056px;width:200px;text-align:right;top:194px;color:#000">127 403,39</div><div class="t d" style="left:51px;top:251px;color:#000;">19.12.2013</div><div class="t d" style="left:51px;top:264px;color:#000;">12:00:00</div><div class="t b" style="left:144px;top:251px;color:#000;">90.09</div><div class="t b" style="left:517px;top:251px;color:#000;">99.01.1</div><div class="t d" style="left:657px;top:251px;color:#000;">Прибыль (убыток) от пр...</div><div class="t d" style="left:890px;top:270px;color:#000;">Финансовый результат</div><div class="t d" style="left:890px;top:283px;color:#000;">корректировки</div><div class="t d" style="left:939px;width:200px;text-align:right;top:251px;color:#000">127 403,39</div><div class="t d" style="left:1056px;width:200px;text-align:right;top:251px;color:#000">127 403,39</div><div class="t d" style="left:51px;top:308px;color:#000;">20.10.2014</div><div class="t d" style="left:51px;top:321px;color:#000;">13:29:32</div><div class="t b" style="left:144px;top:308px;color:#000;">62.01</div><div class="t d" style="left:284px;top:308px;color:#000;">ООО &quot;Генерация&quot;</div><div class="t d" style="left:284px;top:327px;color:#000;">Основной договор</div><div class="t d" style="left:284px;top:346px;color:#000;">Реализация товаров и у...</div><div class="t b" style="left:517px;top:308px;color:#000;">76.К</div><div class="t d" style="left:657px;top:308px;color:#000;">ООО &quot;Генерация&quot;</div><div class="t d" style="left:657px;top:327px;color:#000;">Основной договор</div><div class="t d" style="left:657px;top:346px;color:#000;">Реализация товаров и у...</div><div class="t d" style="left:890px;top:327px;color:#000;">Корректировка</div><div class="t d" style="left:890px;top:340px;color:#000;">реализации</div><div class="t d" style="left:939px;width:200px;text-align:right;top:308px;color:#000">150 336,00</div><div class="t d" style="left:1056px;width:200px;text-align:right;top:308px;color:#000">150 336,00</div><div class="t d" style="left:51px;top:365px;color:#000;">20.10.2014</div><div class="t d" style="left:51px;top:378px;color:#000;">13:29:32</div><div class="t b" style="left:144px;top:365px;color:#000;">62.01</div><div class="t d" style="left:284px;top:365px;color:#000;">ООО &quot;Генерация&quot;</div><div class="t d" style="left:284px;top:384px;color:#000;">Основной договор</div><div class="t d" style="left:284px;top:403px;color:#000;">Реализация товаров и у...</div><div class="t b" style="left:517px;top:365px;color:#000;">91.01</div><div class="t d" style="left:657px;top:384px;color:#000;">Шкаф управления насо...</div><div class="t b" style="left:823px;width:200px;text-align:right;top:365px;color:#000">150 336,00</div><div class="t d" style="left:890px;top:384px;color:#000;">Корректировка</div><div class="t d" style="left:890px;top:397px;color:#000;">реализации</div><div class="t d" style="left:51px;top:422px;color:#000;">20.10.2014</div><div class="t d" style="left:51px;top:435px;color:#000;">13:29:32</div><div class="t b" style="left:144px;top:422px;color:#000;">91.02</div><div class="t d" style="left:284px;top:441px;color:#000;">Шкаф управления насо...</div><div class="t b" style="left:517px;top:422px;color:#000;">68.02</div><div class="t d" style="left:657px;top:422px;color:#000;">Налог (взносы): начисл...</div><div class="t b" style="left:823px;width:200px;text-align:right;top:422px;color:#000">22 932,61</div><div class="t d" style="left:890px;top:441px;color:#000;">Корректировка</div><div class="t d" style="left:890px;top:454px;color:#000;">реализации</div><div class="t d" style="left:51px;top:479px;color:#000;">19.12.2013</div><div class="t d" style="left:51px;top:492px;color:#000;">12:00:00</div><div class="t b" style="left:144px;top:479px;color:#000;">76.К</div><div class="t d" style="left:284px;top:479px;color:#000;">ООО &quot;Генерация&quot;</div><div class="t d" style="left:284px;top:498px;color:#000;">Основной договор</div><div class="t d" style="left:284px;top:517px;color:#000;">Реализация товаров и у...</div><div class="t b" style="left:517px;top:479px;color:#000;">90.01.1</div><div class="t d" style="left:657px;top:479px;color:#000;">Продукция</div><div class="t d" style="left:657px;top:498px;color:#000;">18%</div><div class="t d" style="left:657px;top:517px;color:#000;">Система контроля уров...</div><div class="t d" style="left:890px;top:498px;color:#000;">Корректировка</div><div class="t d" style="left:890px;top:511px;color:#000;">реализации</div><div class="t d" style="left:939px;width:200px;text-align:right;top:479px;color:#000">4 356,00</div><div class="t d" style="left:1056px;width:200px;text-align:right;top:479px;color:#000">3 691,53</div><div class="t d" style="left:51px;top:536px;color:#000;">19.12.2013</div><div class="t d" style="left:51px;top:549px;color:#000;">12:00:00</div><div class="t b" style="left:144px;top:536px;color:#000;">90.09</div><div class="t b" style="left:517px;top:536px;color:#000;">99.01.1</div><div class="t d" style="left:657px;top:536px;color:#000;">Прибыль (убыток) от пр...</div><div class="t d" style="left:890px;top:555px;color:#000;">Финансовый результат</div><div class="t d" style="left:890px;top:568px;color:#000;">корректировки</div><div class="t d" style="left:939px;width:200px;text-align:right;top:536px;color:#000">3 691,53</div><div class="t d" style="left:1056px;width:200px;text-align:right;top:536px;color:#000">3 691,53</div><div class="t d" style="left:51px;top:593px;color:#000;">20.10.2014</div><div class="t d" style="left:51px;top:606px;color:#000;">13:29:32</div><div class="t b" style="left:144px;top:593px;color:#000;">62.01</div><div class="t d" style="left:284px;top:593px;color:#000;">ООО &quot;Генерация&quot;</div><div class="t d" style="left:284px;top:612px;color:#000;">Основной договор</div><div class="t d" style="left:284px;top:631px;color:#000;">Реализация товаров и у...</div><div class="t b" style="left:517px;top:593px;color:#000;">76.К</div><div class="t d" style="left:657px;top:593px;color:#000;">ООО &quot;Генерация&quot;</div><div class="t d" style="left:657px;top:612px;color:#000;">Основной договор</div><div class="t d" style="left:657px;top:631px;color:#000;">Реализация товаров и у...</div><div class="t d" style="left:890px;top:612px;color:#000;">Корректировка</div><div class="t d" style="left:890px;top:625px;color:#000;">реализации</div><div class="t d" style="left:939px;width:200px;text-align:right;top:593px;color:#000">4 356,00</div><div class="t d" style="left:1056px;width:200px;text-align:right;top:593px;color:#000">4 356,00</div><div class="t d" style="left:51px;top:650px;color:#000;">20.10.2014</div><div class="t d" style="left:51px;top:663px;color:#000;">13:29:32</div><div class="t b" style="left:144px;top:650px;color:#000;">62.01</div><div class="t d" style="left:284px;top:650px;color:#000;">ООО &quot;Генерация&quot;</div><div class="t d" style="left:284px;top:669px;color:#000;">Основной договор</div><div class="t d" style="left:284px;top:688px;color:#000;">Реализация товаров и у...</div><div class="t b" style="left:517px;top:650px;color:#000;">91.01</div><div class="t d" style="left:657px;top:669px;color:#000;">Система контроля уров...</div><div class="t b" style="left:823px;width:200px;text-align:right;top:650px;color:#000">4 356,00</div><div class="t d" style="left:890px;top:669px;color:#000;">Корректировка</div><div class="t d" style="left:890px;top:682px;color:#000;">реализации</div><div class="t d" style="left:51px;top:707px;color:#000;">20.10.2014</div><div class="t d" style="left:51px;top:720px;color:#000;">13:29:32</div><div class="t b" style="left:144px;top:707px;color:#000;">91.02</div><div class="t d" style="left:284px;top:726px;color:#000;">Система контроля уров...</div><div class="t b" style="left:517px;top:707px;color:#000;">68.02</div><div class="t d" style="left:657px;top:707px;color:#000;">Налог (взносы): начисл...</div><div class="t b" style="left:823px;width:200px;text-align:right;top:707px;color:#000">664,47</div><div class="t d" style="left:890px;top:726px;color:#000;">Корректировка</div><div class="t d" style="left:890px;top:739px;color:#000;">реализации</div>
</div>
</body></html>
